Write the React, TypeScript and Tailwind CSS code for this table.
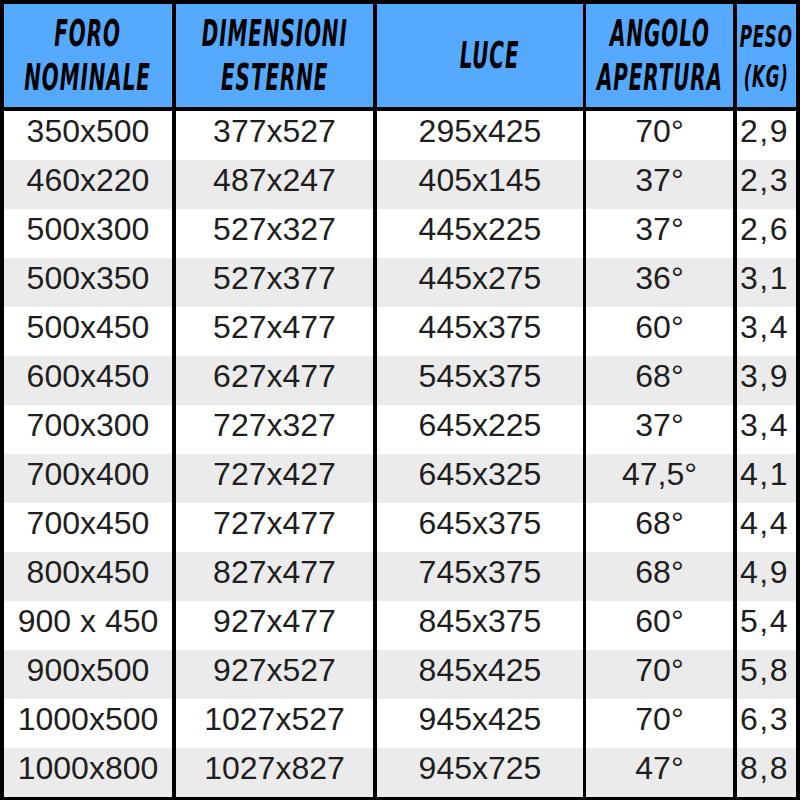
const ROWS: [string, string, string, string, string][] = [
  ['350x500', '377x527', '295x425', '70°', '2,9'],
  ['460x220', '487x247', '405x145', '37°', '2,3'],
  ['500x300', '527x327', '445x225', '37°', '2,6'],
  ['500x350', '527x377', '445x275', '36°', '3,1'],
  ['500x450', '527x477', '445x375', '60°', '3,4'],
  ['600x450', '627x477', '545x375', '68°', '3,9'],
  ['700x300', '727x327', '645x225', '37°', '3,4'],
  ['700x400', '727x427', '645x325', '47,5°', '4,1'],
  ['700x450', '727x477', '645x375', '68°', '4,4'],
  ['800x450', '827x477', '745x375', '68°', '4,9'],
  ['900 x 450', '927x477', '845x375', '60°', '5,4'],
  ['900x500', '927x527', '845x425', '70°', '5,8'],
  ['1000x500', '1027x527', '945x425', '70°', '6,3'],
  ['1000x800', '1027x827', '945x725', '47°', '8,8'],
];

// column widths incl. left rule
const COLS = ['w-[168px]', 'w-[201px] border-l-4', 'w-[210px] border-l-4', 'w-[150px] border-l-[3px]', 'w-[63px] border-l-4'];

const headFont = { fontFamily: '"DejaVu Sans Condensed", "DejaVu Sans", sans-serif' };
const bodyFont = { fontFamily: '"Liberation Sans", Arial, sans-serif' };

function HeadCell({ lines, idx, small, extra = '' }: { lines: string[]; idx: number; small?: boolean; extra?: string }) {
  return (
    <div className={`${COLS[idx]} border-black flex items-center justify-center bg-[#55aaff] ${extra}`}>
      <div
        style={headFont}
        className={`text-center font-bold italic text-black scale-x-60 tracking-[0.04em] ${
          small ? 'text-[31px] leading-[40px]' : 'text-[37px] leading-[44px]'
        }`}
      >
        {lines.map((l) => (
          <div key={l} className="whitespace-nowrap">{l}</div>
        ))}
      </div>
    </div>
  );
}

export default function App() {
  return (
    <div className="w-[800px] h-[800px] bg-black pt-1 px-1 pb-[3px] flex flex-col">
      {/* header */}
      <div className="flex h-[107px] border-b-4 border-black">
        <HeadCell idx={0} lines={['FORO', 'NOMINALE']} />
        <HeadCell idx={1} lines={['DIMENSIONI', 'ESTERNE']} />
        <HeadCell idx={2} lines={['LUCE']} extra="pl-5" />
        <HeadCell idx={3} lines={['ANGOLO', 'APERTURA']} />
        <HeadCell idx={4} lines={['PESO', '(KG)']} small />
      </div>

      {/* body */}
      {ROWS.map((row, r) => (
        <div key={r} className={`flex h-[49px] ${r % 2 === 1 ? 'bg-[#ebebeb]' : 'bg-white'}`}>
          {row.map((v, c) => (
            <div
              key={c}
              style={bodyFont}
              className={`${COLS[c]} border-black flex items-center pb-[10px] text-[32px] leading-none text-[#1e1e1e] ${
                c === 4 ? 'justify-start pl-[3px] tracking-[1.5px]' : 'justify-center'
              }`}
            >
              {v}
            </div>
          ))}
        </div>
      ))}
    </div>
  );
}
